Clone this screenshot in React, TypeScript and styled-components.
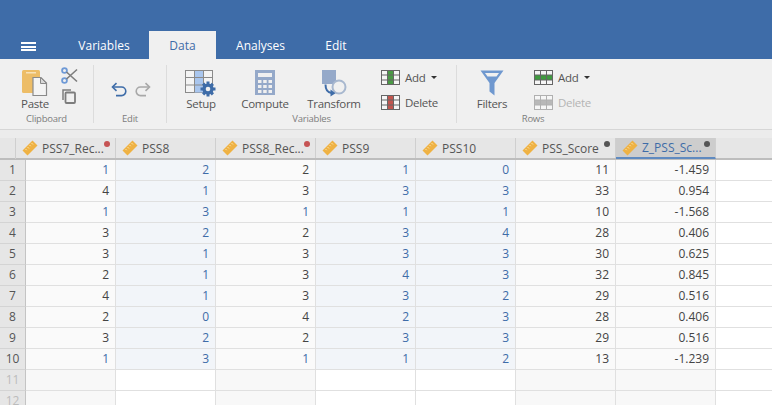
import React from "react";
import styled, { createGlobalStyle } from "styled-components";

const GlobalStyle = createGlobalStyle`
  html, body {
    margin: 0;
    padding: 0;
    height: 100%;
    overflow: hidden;
    background: #ececec;
    font-family: "Open Sans", "Noto Sans", sans-serif;
  }
`;

const Page = styled.div`
  width: 772px;
  height: 405px;
  overflow: hidden;
  color: #444;
`;

const TopBar = styled.div`
  height: 59px;
  background: #3e6ca8;
  display: flex;
  align-items: flex-end;
`;

const Hamburger = styled.div`
  width: 15px;
  height: 5px;
  margin: 0 0 8px 21px;
  border-top: 2px solid #fff;
  border-bottom: 2px solid #fff;
  &::after {
    content: "";
    display: block;
    height: 2px;
    background: #fff;
    margin-top: 1.5px;
  }
`;

const Tabs = styled.div`
  display: flex;
  margin-left: 23px;
`;

const Tab = styled.div<{ $active?: boolean; $w: number }>`
  height: 28px;
  line-height: 29px;
  width: ${(p) => p.$w}px;
  text-align: center;
  font-size: 12px;
  color: ${(p) => (p.$active ? "#3e6ca8" : "#fff")};
  background: ${(p) => (p.$active ? "#f0f0f0" : "transparent")};
`;

const Ribbon = styled.div`
  height: 70px;
  background: #f0f0f0;
  border-bottom: 1px solid #d6d6d6;
  display: flex;
`;

const Group = styled.div<{ $w: number; $last?: boolean }>`
  width: ${(p) => p.$w}px;
  margin-top: 6px;
  height: 58px;
  border-right: ${(p) => (p.$last ? "none" : "1px solid #dcdcdc")};
  display: flex;
  flex-direction: column;
`;

const GroupBody = styled.div<{ $pad: number }>`
  height: 46px;
  flex: none;
  display: flex;
  padding-left: ${(p) => p.$pad}px;
`;

const GroupLabel = styled.div`
  font-size: 9.5px;
  letter-spacing: -0.25px;
  line-height: 14px;
  text-align: center;
  color: #7d7d7d;
  margin-top: 1px;
`;

const BigButton = styled.div<{ $w: number; $ml?: number }>`
  width: ${(p) => p.$w}px;
  margin-left: ${(p) => p.$ml ?? 0}px;
  flex: none;
  display: flex;
  flex-direction: column;
  align-items: center;
  font-size: 11.5px;
  letter-spacing: -0.3px;
  line-height: 16px;
  color: #555;
`;

const IconSlot = styled.div`
  height: 26px;
  flex: none;
  margin-top: 5px;
`;

const ClipStack = styled.div`
  display: flex;
  flex-direction: column;
  align-items: flex-start;
  gap: 5px;
  margin-left: 10px;
  padding-top: 2px;
`;

const CopySlot = styled.div`
  margin-left: 1px;
  line-height: 0;
`;

const SmallButton = styled.div<{ $off?: boolean }>`
  height: 15px;
  display: flex;
  align-items: center;
  gap: 5px;
  font-size: 11.5px;
  letter-spacing: -0.3px;
  line-height: 15px;
  color: ${(p) => (p.$off ? "#b4b4b4" : "#555")};
`;

const Caret = styled.span`
  width: 0;
  height: 0;
  margin-left: 1px;
  border-left: 3px solid transparent;
  border-right: 3px solid transparent;
  border-top: 3px solid #333;
`;

const ToolStack = styled.div<{ $ml: number }>`
  display: flex;
  flex-direction: column;
  align-items: flex-start;
  gap: 10px;
  margin-left: ${(p) => p.$ml}px;
  padding-top: 5px;
`;

const HistoryRow = styled.div`
  display: flex;
  gap: 8px;
  padding-top: 17px;
`;

const Spacer = styled.div`
  height: 8px;
`;

const HeaderRow = styled.div`
  height: 22px;
  display: grid;
  grid-template-columns: 16px repeat(7, 100px) 1fr;
  background: #e6e6e6;
  border-bottom: 2px solid #bdbdbd;
  box-sizing: border-box;
`;

const HeaderCorner = styled.div`
  border-right: 1px solid #cfcfcf;
`;

const HeaderCell = styled.div<{ $selected?: boolean }>`
  position: relative;
  height: ${(p) => (p.$selected ? "21px" : "20px")};
  display: flex;
  align-items: center;
  gap: 4px;
  padding-left: 6px;
  box-sizing: border-box;
  font-size: 12px;
  white-space: nowrap;
  color: ${(p) => (p.$selected ? "#3e6ca8" : "#555")};
  background: ${(p) => (p.$selected ? "#cdcdcd" : "transparent")};
  border-right: 1px solid #cfcfcf;
  border-bottom: ${(p) => (p.$selected ? "2px solid #5f8ac0" : "none")};
`;

const StatusDot = styled.span<{ $color: string }>`
  position: absolute;
  top: 3px;
  right: 5px;
  width: 6px;
  height: 6px;
  border-radius: 50%;
  background: ${(p) => p.$color};
`;

const Row = styled.div`
  height: 21px;
  display: grid;
  grid-template-columns: 26px 90px repeat(6, 100px) 100px 1fr;
  background: #fff;
`;

const RowNumber = styled.div<{ $empty?: boolean }>`
  background: #e6e6e6;
  border-right: 1px solid #c4c4c4;
  border-bottom: 1px solid #d4d4d4;
  box-sizing: border-box;
  text-align: center;
  font-size: 12px;
  line-height: 20px;
  color: ${(p) => (p.$empty ? "#bcbcbc" : "#555")};
`;

const Cell = styled.div<{ $tint?: boolean; $empty?: boolean; $accent?: boolean }>`
  box-sizing: border-box;
  border-right: 1px solid #e0e0e0;
  border-bottom: 1px solid #e0e0e0;
  padding-right: 6px;
  text-align: right;
  font-size: 12px;
  line-height: 20px;
  color: ${(p) => (p.$tint || p.$accent ? "#3e6ca8" : "#444")};
  background: ${(p) => {
    if (p.$tint) return p.$empty ? "#fff" : "#f2f5f9";
    return p.$empty ? "#f8f8f8" : "#fafafa";
  }};
`;

const RowEnd = styled.div`
  border-bottom: 1px solid #e0e0e0;
`;

const Ruler = () => (
  <svg width="16" height="16" viewBox="0 0 16 16" style={{ flex: "none" }}>
    <path d="M10.5 0.5 15.5 5.5 5.5 15.5 0.5 10.5Z" fill="#efb243" />
    <path d="M9.5 3 11 4.5M7.5 5 8.7 6.2M5.5 7 7 8.5M3.5 9 4.7 10.2" stroke="#fbe3ae" strokeWidth="1" />
  </svg>
);

const PasteIcon = () => (
  <svg width="26" height="27" viewBox="0 0 26 27">
    <rect x="0" y="0" width="18" height="23" rx="1.5" fill="#edbd67" />
    <rect x="4" y="2" width="10" height="1.5" fill="#f8e2b8" />
    <path d="M11 7.5H19L24.5 13V25.5H11Z" fill="#f4f4f4" stroke="#8a8a8a" strokeWidth="1.2" />
    <path d="M18.5 7.5V13.5H24.5Z" fill="#d9d9d9" stroke="#8a8a8a" strokeWidth="1" />
  </svg>
);

const ScissorsIcon = () => (
  <svg width="17" height="17" viewBox="0 0 17 17">
    <circle cx="3.5" cy="3.5" r="2.4" fill="none" stroke="#6f9ad6" strokeWidth="1.8" />
    <circle cx="3.5" cy="13.5" r="2.4" fill="none" stroke="#6f9ad6" strokeWidth="1.8" />
    <path d="M5.5 5 16 14.5M5.5 12 16 2.5" stroke="#7d7d7d" strokeWidth="1.6" />
  </svg>
);

const CopyIcon = () => (
  <svg width="14" height="15" viewBox="0 0 14 15">
    <path d="M1 11V1H9" fill="none" stroke="#7d7d7d" strokeWidth="1.5" />
    <rect x="3.5" y="3.5" width="9.5" height="10.5" rx="1" fill="none" stroke="#7d7d7d" strokeWidth="1.8" />
  </svg>
);

const UndoIcon = ({ flip, color }: { flip?: boolean; color: string }) => (
  <svg width="16" height="16" viewBox="0 0 16 16" style={flip ? { transform: "scaleX(-1)" } : undefined}>
    <path d="M2 5H10.5A4.3 4.3 0 0 1 10.5 13.6H5" fill="none" stroke={color} strokeWidth="1.6" />
    <path d="M5.5 1.2 1.5 5 5.5 8.8" fill="none" stroke={color} strokeWidth="1.6" />
  </svg>
);

const SetupIcon = () => (
  <svg width="32" height="28" viewBox="0 0 32 28">
    <rect x="0.5" y="0.5" width="27" height="22" fill="#f4f4f4" stroke="#8a8a8a" />
    <rect x="9.5" y="1" width="9" height="21.5" fill="#a9c6ee" />
    <path d="M9.5 0.5V22.5M18.5 0.5V22.5M0.5 7.5H27.5M0.5 15H27.5" stroke="#8a8a8a" />
    <g fill="#3e6ca8">
      <circle cx="23" cy="19" r="5.6" />
      <path d="M21.5 11.5H24.5V15H21.5ZM21.5 23H24.5V26.5H21.5ZM15.5 17.5H19V20.5H15.5ZM27 17.5H30.5V20.5H27Z" />
      <path d="M17 14.8 19.2 12.6 21.5 15 19.4 17ZM24.6 23 26.8 20.9 29 23.2 26.8 25.4ZM17 23.2 19.3 21 21.4 23 19.2 25.4ZM24.6 15 26.8 12.7 29 14.9 26.8 17Z" />
    </g>
    <circle cx="23" cy="19" r="2.3" fill="#f0f0f0" />
  </svg>
);

const ComputeIcon = () => (
  <svg width="20" height="27" viewBox="0 0 20 27">
    <rect width="20" height="25" fill="#95a9c9" />
    <rect x="3" y="3" width="14" height="4" fill="#f0f0f0" />
    <path d="M3 10h3.5v3H3ZM8.2 10h3.5v3H8.2ZM13.5 10H17v3h-3.5ZM3 15h3.5v3H3ZM8.2 15h3.5v3H8.2ZM13.5 15H17v3h-3.5ZM3 20h3.5v3H3ZM8.2 20h3.5v3H8.2ZM13.5 20H17v3h-3.5Z" fill="#f0f0f0" />
  </svg>
);

const TransformIcon = () => (
  <svg width="25" height="27" viewBox="0 0 25 27">
    <rect x="0" y="0" width="14" height="14" fill="#95a9c9" />
    <circle cx="17" cy="17" r="6.5" fill="#f0f0f0" stroke="#a8b8cf" strokeWidth="2" />
    <path d="M3.5 14.5C3.5 20 6 22.5 9.5 23" fill="none" stroke="#3e6ca8" strokeWidth="2" />
    <path d="M8.5 19.5 13.5 23.2 8.5 26.5Z" fill="#3e6ca8" />
  </svg>
);

const GridIcon = ({ fill, line, horizontal }: { fill: string; line: string; horizontal?: boolean }) => (
  <svg width="19" height="15" viewBox="0 0 19 15" style={{ flex: "none" }}>
    <rect x="0.5" y="0.5" width="18" height="14" fill="#f6f6f6" stroke={line} />
    {horizontal ? (
      <rect x="1" y="5" width="17" height="5" fill={fill} />
    ) : (
      <rect x="6.5" y="1" width="6" height="13" fill={fill} />
    )}
    <path d="M6.5 0.5V14.5M12.5 0.5V14.5M0.5 5H18.5M0.5 10H18.5" stroke={line} strokeWidth="1" fill="none" />
  </svg>
);

const FilterIcon = () => (
  <svg width="24" height="26" viewBox="0 0 24 26">
    <path d="M0.5 0.5H23.5L14.5 13V25.5L9.5 21.5V13Z" fill="#6f98cf" />
    <path d="M5 3H19L16.5 6.5H7.5Z" fill="#f0f0f0" />
  </svg>
);

const columns = [
  { name: "PSS7_Rec...", dot: "#c65454", tint: false, coded: true },
  { name: "PSS8", tint: true },
  { name: "PSS8_Rec...", dot: "#c65454", tint: false, coded: true },
  { name: "PSS9", tint: true },
  { name: "PSS10", tint: true },
  { name: "PSS_Score", dot: "#555555", tint: false },
  { name: "Z_PSS_Sc...", dot: "#555555", tint: false, selected: true },
];

const rows = [
  ["1", "2", "2", "1", "0", "11", "-1.459"],
  ["4", "1", "3", "3", "3", "33", "0.954"],
  ["1", "3", "1", "1", "1", "10", "-1.568"],
  ["3", "2", "2", "3", "4", "28", "0.406"],
  ["3", "1", "3", "3", "3", "30", "0.625"],
  ["2", "1", "3", "4", "3", "32", "0.845"],
  ["4", "1", "3", "3", "2", "29", "0.516"],
  ["2", "0", "4", "2", "3", "28", "0.406"],
  ["3", "2", "2", "3", "3", "29", "0.516"],
  ["1", "3", "1", "1", "2", "13", "-1.239"],
];

const App: React.FC = () => (
  <Page>
    <GlobalStyle />
    <TopBar>
      <Hamburger />
      <Tabs>
        <Tab $w={90}>Variables</Tab>
        <Tab $w={67} $active>Data</Tab>
        <Tab $w={89}>Analyses</Tab>
        <Tab $w={62}>Edit</Tab>
      </Tabs>
    </TopBar>
    <Ribbon>
      <Group $w={93}>
        <GroupBody $pad={19}>
          <BigButton $w={32}>
            <IconSlot><PasteIcon /></IconSlot>
            Paste
          </BigButton>
          <ClipStack>
            <ScissorsIcon />
            <CopySlot><CopyIcon /></CopySlot>
          </ClipStack>
        </GroupBody>
        <GroupLabel>Clipboard</GroupLabel>
      </Group>
      <Group $w={72}>
        <GroupBody $pad={17}>
          <HistoryRow>
            <UndoIcon color="#3e6ca8" />
            <UndoIcon flip color="#a8a8a8" />
          </HistoryRow>
        </GroupBody>
        <GroupLabel>Edit</GroupLabel>
      </Group>
      <Group $w={289}>
        <GroupBody $pad={13}>
          <BigButton $w={42}>
            <IconSlot><SetupIcon /></IconSlot>
            Setup
          </BigButton>
          <BigButton $w={58} $ml={14}>
            <IconSlot><ComputeIcon /></IconSlot>
            Compute
          </BigButton>
          <BigButton $w={60} $ml={10}>
            <IconSlot><TransformIcon /></IconSlot>
            Transform
          </BigButton>
          <ToolStack $ml={17}>
            <SmallButton>
              <GridIcon fill="#4a9a45" line="#666" />
              Add <Caret />
            </SmallButton>
            <SmallButton>
              <GridIcon fill="#c2554e" line="#666" />
              Delete
            </SmallButton>
          </ToolStack>
        </GroupBody>
        <GroupLabel>Variables</GroupLabel>
      </Group>
      <Group $w={152} $last>
        <GroupBody $pad={18}>
          <BigButton $w={34}>
            <IconSlot><FilterIcon /></IconSlot>
            Filters
          </BigButton>
          <ToolStack $ml={25}>
            <SmallButton>
              <GridIcon fill="#3f9a3f" line="#666" horizontal />
              Add <Caret />
            </SmallButton>
            <SmallButton $off>
              <GridIcon fill="#b8b8b8" line="#b0b0b0" horizontal />
              Delete
            </SmallButton>
          </ToolStack>
        </GroupBody>
        <GroupLabel>Rows</GroupLabel>
      </Group>
    </Ribbon>
    <Spacer />
    <HeaderRow>
      <HeaderCorner />
      {columns.map((col) => (
        <HeaderCell key={col.name} $selected={col.selected}>
          <Ruler />
          {col.name}
          {col.dot && <StatusDot $color={col.dot} />}
        </HeaderCell>
      ))}
      <div />
    </HeaderRow>
    {rows.map((values, i) => (
      <Row key={i}>
        <RowNumber>{i + 1}</RowNumber>
        {values.map((value, j) => (
          <Cell key={j} $tint={columns[j].tint} $accent={columns[j].coded && value === "1"}>
            {value}
          </Cell>
        ))}
        <RowEnd />
      </Row>
    ))}
    {[11, 12].map((n) => (
      <Row key={n}>
        <RowNumber $empty>{n}</RowNumber>
        {columns.map((col) => (
          <Cell key={col.name} $tint={col.tint} $empty />
        ))}
        <RowEnd />
      </Row>
    ))}
  </Page>
);

export default App;
